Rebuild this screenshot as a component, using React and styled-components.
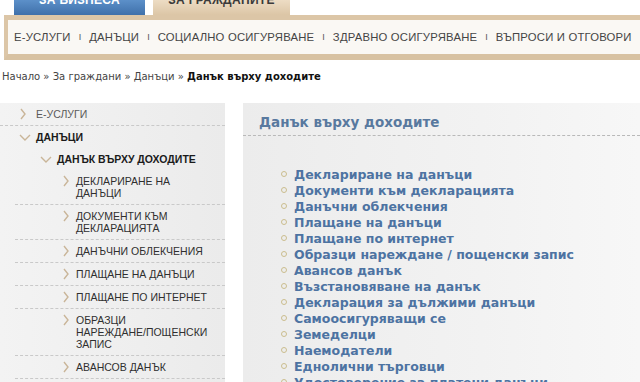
import React from "react";
import styled, { createGlobalStyle } from "styled-components";

const GlobalStyle = createGlobalStyle`
  html, body {
    margin: 0;
    padding: 0;
    background: #ffffff;
    width: 640px;
    height: 382px;
    overflow: hidden;
  }
`;

const Page = styled.div`
  width: 640px;
  height: 382px;
  overflow: hidden;
  font-family: "Liberation Sans", Arial, sans-serif;
`;

const Tabs = styled.div`
  display: flex;
  gap: 8px;
  padding-left: 14px;
  height: 15px;
`;

const Tab = styled.div`
  width: ${(p) => p.$w}px;
  height: 15px;
  overflow: hidden;
  display: flex;
  justify-content: center;
  background: ${(p) =>
    p.$active
      ? "linear-gradient(#eddcc4, #dcc6a6)"
      : "linear-gradient(#5c90c9, #3f70aa)"};
  color: ${(p) => (p.$active ? "#3b3b3b" : "#ffffff")};
  span {
    display: block;
    margin-top: -6px;
    font-size: 12px;
    line-height: 12px;
    font-weight: bold;
    letter-spacing: 0.3px;
  }
`;

const NavBar = styled.div`
  margin-left: 4px;
  height: 34px;
  border-top: 5px solid #dcc6a7;
  border-left: 4px solid #dcc6a7;
  border-bottom: 6px solid #d8c2a2;
  background: #faf8f4;
  display: flex;
  align-items: center;
  padding-left: 6px;
  white-space: nowrap;
  overflow: hidden;
`;

const NavItem = styled.span`
  font-size: 11.3px;
  color: #454545;
  letter-spacing: 0.2px;
`;

const NavSep = styled.span`
  font-size: 9px;
  color: #555;
  margin: 0 8px;
`;

const Crumbs = styled.div`
  padding: 11px 0 0 2px;
  height: 32px;
  font-family: "DejaVu Sans", Verdana, sans-serif;
  font-size: 10px;
  color: #444;
  white-space: nowrap;
  b {
    color: #111;
  }
`;

const Columns = styled.div`
  display: grid;
  grid-template-columns: 225px 1fr;
  column-gap: 18px;
  align-items: start;
`;

const Sidebar = styled.div`
  background: linear-gradient(90deg, #f3f3f3, #ebebeb);
  min-height: 290px;
`;

const Row = styled.div`
  display: flex;
  align-items: flex-start;
  padding: ${(p) => (p.$tight ? 4 : 5)}px 0 ${(p) => (p.$tight ? 4 : 5)}px
    ${(p) => p.$indent}px;
  margin-left: ${(p) => (p.$sepInset ? 15 : 0)}px;
  border-bottom: ${(p) => (p.$sep ? "1px dashed #c9c9c9" : "1px solid transparent")};
  line-height: 12px;
`;

const Chevron = styled.span`
  width: ${(p) => (p.$open ? 12 : 6)}px;
  height: 12px;
  margin-right: ${(p) => p.$gap}px;
  flex: none;
  display: flex;
  align-items: center;
`;

const RowText = styled.span`
  font-size: 10.5px;
  font-weight: ${(p) => (p.$bold ? "bold" : "normal")};
  color: ${(p) => (p.$bold ? "#1b1b1b" : p.$muted ? "#5a5a5a" : "#2f2f2f")};
  text-transform: uppercase;
`;

const Panel = styled.div`
  background: linear-gradient(90deg, #ececec 0%, #f2f2f2 60%, #f7f7f7 100%);
  min-height: 290px;
`;

const PanelHead = styled.div`
  height: 33px;
  padding: 5px 0 0 16px;
  box-sizing: border-box;
  display: flex;
  align-items: center;
  border-bottom: 1px dashed #b9b9b9;
  font-family: "DejaVu Sans", Verdana, sans-serif;
  font-weight: bold;
  font-size: 13.5px;
  color: #58799f;
`;

const List = styled.ul`
  list-style: none;
  margin: 0;
  padding: 30px 0 0 38px;
`;

const Item = styled.li`
  display: flex;
  align-items: center;
  height: 16px;
  font-family: "DejaVu Sans", Verdana, sans-serif;
  font-weight: bold;
  font-size: 12.5px;
  color: #4d73a2;
  white-space: nowrap;
  &::before {
    content: "";
    width: 4px;
    height: 4px;
    border: 1px solid #cbbd8e;
    border-radius: 50%;
    margin-right: 7px;
    flex: none;
  }
`;

const ChevronIcon = ({ open }) =>
  open ? (
    <svg width="12" height="7" viewBox="0 0 12 7">
      <path d="M1 1 L6 6 L11 1" fill="none" stroke="#c9b598" strokeWidth="1.4" />
    </svg>
  ) : (
    <svg width="6" height="12" viewBox="0 0 6 12">
      <path d="M1 1 L5 6 L1 11" fill="none" stroke="#c9b598" strokeWidth="1.4" />
    </svg>
  );

const nav = [
  "Е-УСЛУГИ",
  "ДАНЪЦИ",
  "СОЦИАЛНО ОСИГУРЯВАНЕ",
  "ЗДРАВНО ОСИГУРЯВАНЕ",
  "ВЪПРОСИ И ОТГОВОРИ",
];

const side = [
  { text: ["Е-УСЛУГИ"], indent: 20, gap: 10, sep: true, muted: true },
  { text: ["ДАНЪЦИ"], indent: 19, gap: 5, open: true, bold: true },
  { text: ["ДАНЪК ВЪРХУ ДОХОДИТЕ"], indent: 40, gap: 5, open: true, bold: true, tight: true },
  { text: ["ДЕКЛАРИРАНЕ НА", "ДАНЪЦИ"], indent: 48, gap: 7, sep: true, inset: true },
  { text: ["ДОКУМЕНТИ КЪМ", "ДЕКЛАРАЦИЯТА"], indent: 48, gap: 7, sep: true, inset: true },
  { text: ["ДАНЪЧНИ ОБЛЕКЧЕНИЯ"], indent: 48, gap: 7, sep: true, inset: true },
  { text: ["ПЛАЩАНЕ НА ДАНЪЦИ"], indent: 48, gap: 7, sep: true, inset: true },
  { text: ["ПЛАЩАНЕ ПО ИНТЕРНЕТ"], indent: 48, gap: 7, sep: true, inset: true },
  { text: ["ОБРАЗЦИ", "НАРЕЖДАНЕ/ПОЩЕНСКИ", "ЗАПИС"], indent: 48, gap: 7, sep: true, inset: true },
  { text: ["АВАНСОВ ДАНЪК"], indent: 48, gap: 7, sep: true, inset: true },
];

const items = [
  "Деклариране на данъци",
  "Документи към декларацията",
  "Данъчни облекчения",
  "Плащане на данъци",
  "Плащане по интернет",
  "Образци нареждане / пощенски запис",
  "Авансов данък",
  "Възстановяване на данък",
  "Декларация за дължими данъци",
  "Самоосигуряващи се",
  "Земеделци",
  "Наемодатели",
  "Еднолични търговци",
  "Удостоверение за платени данъци",
];

export default function App() {
  return (
    <Page>
      <GlobalStyle />
      <Tabs>
        <Tab $w={131}>
          <span>ЗА БИЗНЕСА</span>
        </Tab>
        <Tab $w={137} $active>
          <span>ЗА ГРАЖДАНИТЕ</span>
        </Tab>
      </Tabs>
      <NavBar>
        {nav.map((n, i) => (
          <React.Fragment key={n}>
            {i > 0 && <NavSep>I</NavSep>}
            <NavItem>{n}</NavItem>
          </React.Fragment>
        ))}
      </NavBar>
      <Crumbs>
        Начало » За граждани » Данъци » <b>Данък върху доходите</b>
      </Crumbs>
      <Columns>
        <Sidebar>
          {side.map((r, i) => (
            <Row
              key={i}
              $indent={r.indent}
              $sep={r.sep}
              $sepInset={r.inset}
              $tight={r.tight}
            >
              <Chevron $open={r.open} $gap={r.gap}>
                <ChevronIcon open={r.open} />
              </Chevron>
              <RowText $bold={r.bold} $muted={r.muted}>
                {r.text.map((t, j) => (
                  <React.Fragment key={j}>
                    {j > 0 && <br />}
                    {t}
                  </React.Fragment>
                ))}
              </RowText>
            </Row>
          ))}
        </Sidebar>
        <Panel>
          <PanelHead>Данък върху доходите</PanelHead>
          <List>
            {items.map((t) => (
              <Item key={t}>{t}</Item>
            ))}
          </List>
        </Panel>
      </Columns>
    </Page>
  );
}
